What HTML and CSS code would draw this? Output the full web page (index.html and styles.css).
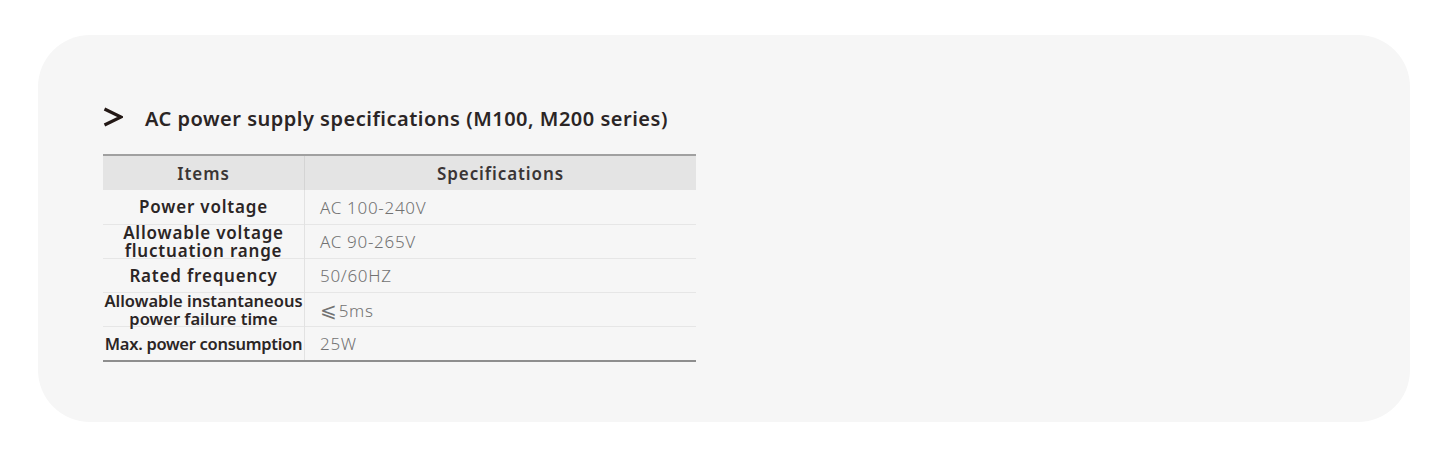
FILE: index.html
```html
<!DOCTYPE html>
<html lang="en">
<head>
<meta charset="utf-8">
<title>AC power supply specifications</title>
<link rel="stylesheet" href="styles.css">
</head>
<body>
<section class="card">
  <h2 class="title">
    <svg class="chev" width="20" height="20" viewBox="0 0 20 20" aria-hidden="true">
      <polyline points="1.5,2 18,10 1.5,18" fill="none" stroke="#231815" stroke-width="3.2" stroke-linejoin="miter"/>
    </svg>
    <span>AC power supply specifications (M100, M200 series)</span>
  </h2>
  <table class="spec">
    <thead>
      <tr><th class="c1">Items</th><th class="c2">Specifications</th></tr>
    </thead>
    <tbody>
      <tr><td class="lbl"><div class="cell">Power voltage</div></td><td class="val">AC 100-240V</td></tr>
      <tr><td class="lbl"><div class="cell">Allowable voltage<br>fluctuation range</div></td><td class="val">AC 90-265V</td></tr>
      <tr><td class="lbl"><div class="cell">Rated frequency</div></td><td class="val">50/60HZ</td></tr>
      <tr><td class="lbl sm"><div class="cell">Allowable instantaneous<br>power failure time</div></td><td class="val"><span class="le">⩽</span>5ms</td></tr>
      <tr><td class="lbl sm tight"><div class="cell">Max. power consumption</div></td><td class="val">25W</td></tr>
    </tbody>
  </table>
</section>
</body>
</html>
```
FILE: styles.css
```css
html, body {
  margin: 0;
  padding: 0;
  background: #ffffff;
}
body {
  font-family: "Noto Sans", "Open Sans", sans-serif;
  padding: 35px 30px 40px 38px;
}
.card {
  background: #f6f6f6;
  border-radius: 52px;
  height: 387px;
  box-sizing: border-box;
  padding: 70px 0 0 65px;
}
.title {
  display: flex;
  align-items: center;
  margin: 0 0 21px 0;
  font-size: 20px;
  font-weight: 600;
  color: #2b2525;
  line-height: 28px;
  letter-spacing: 0.5px;
}
.chev {
  margin-right: 22px;
  margin-top: -4px;
}
.spec {
  border-collapse: collapse;
  width: 593px;
  border-top: 2px solid #a0a0a0;
  border-bottom: 2px solid #8e8e8e;
}
.spec th {
  background: #e4e4e4;
  height: 34px;
  padding: 0;
  font-size: 17px;
  font-weight: 600;
  color: #3a3535;
  text-align: center;
  letter-spacing: 0.9px;
}
.spec th.c1 {
  width: 201px;
  border-right: 1px solid #d4d4d4;
}
.spec td {
  padding: 0;
  border-top: 1px solid #e6e6e6;
}
.spec tbody tr:first-child td {
  border-top: none;
}
.spec tbody tr:first-child .cell {
  height: 34px;
}
.cell {
  height: 33px;
  display: flex;
  flex-direction: column;
  justify-content: center;
  align-items: center;
}
.lbl {
  text-align: center;
  font-size: 17px;
  font-weight: 600;
  color: #2b2525;
  line-height: 18px;
  border-right: 1px solid #e2e2e2;
  letter-spacing: 0.8px;
}
.lbl.sm {
  font-size: 16.5px;
  letter-spacing: 0px;
}
.lbl.tight {
  letter-spacing: -0.3px;
}
.val {
  padding-left: 15px !important;
  font-size: 17px;
  font-weight: 300;
  color: #727272;
  letter-spacing: 0.7px;
}
.le {
  font-size: 20px;
  margin-right: 1px;
}
```
